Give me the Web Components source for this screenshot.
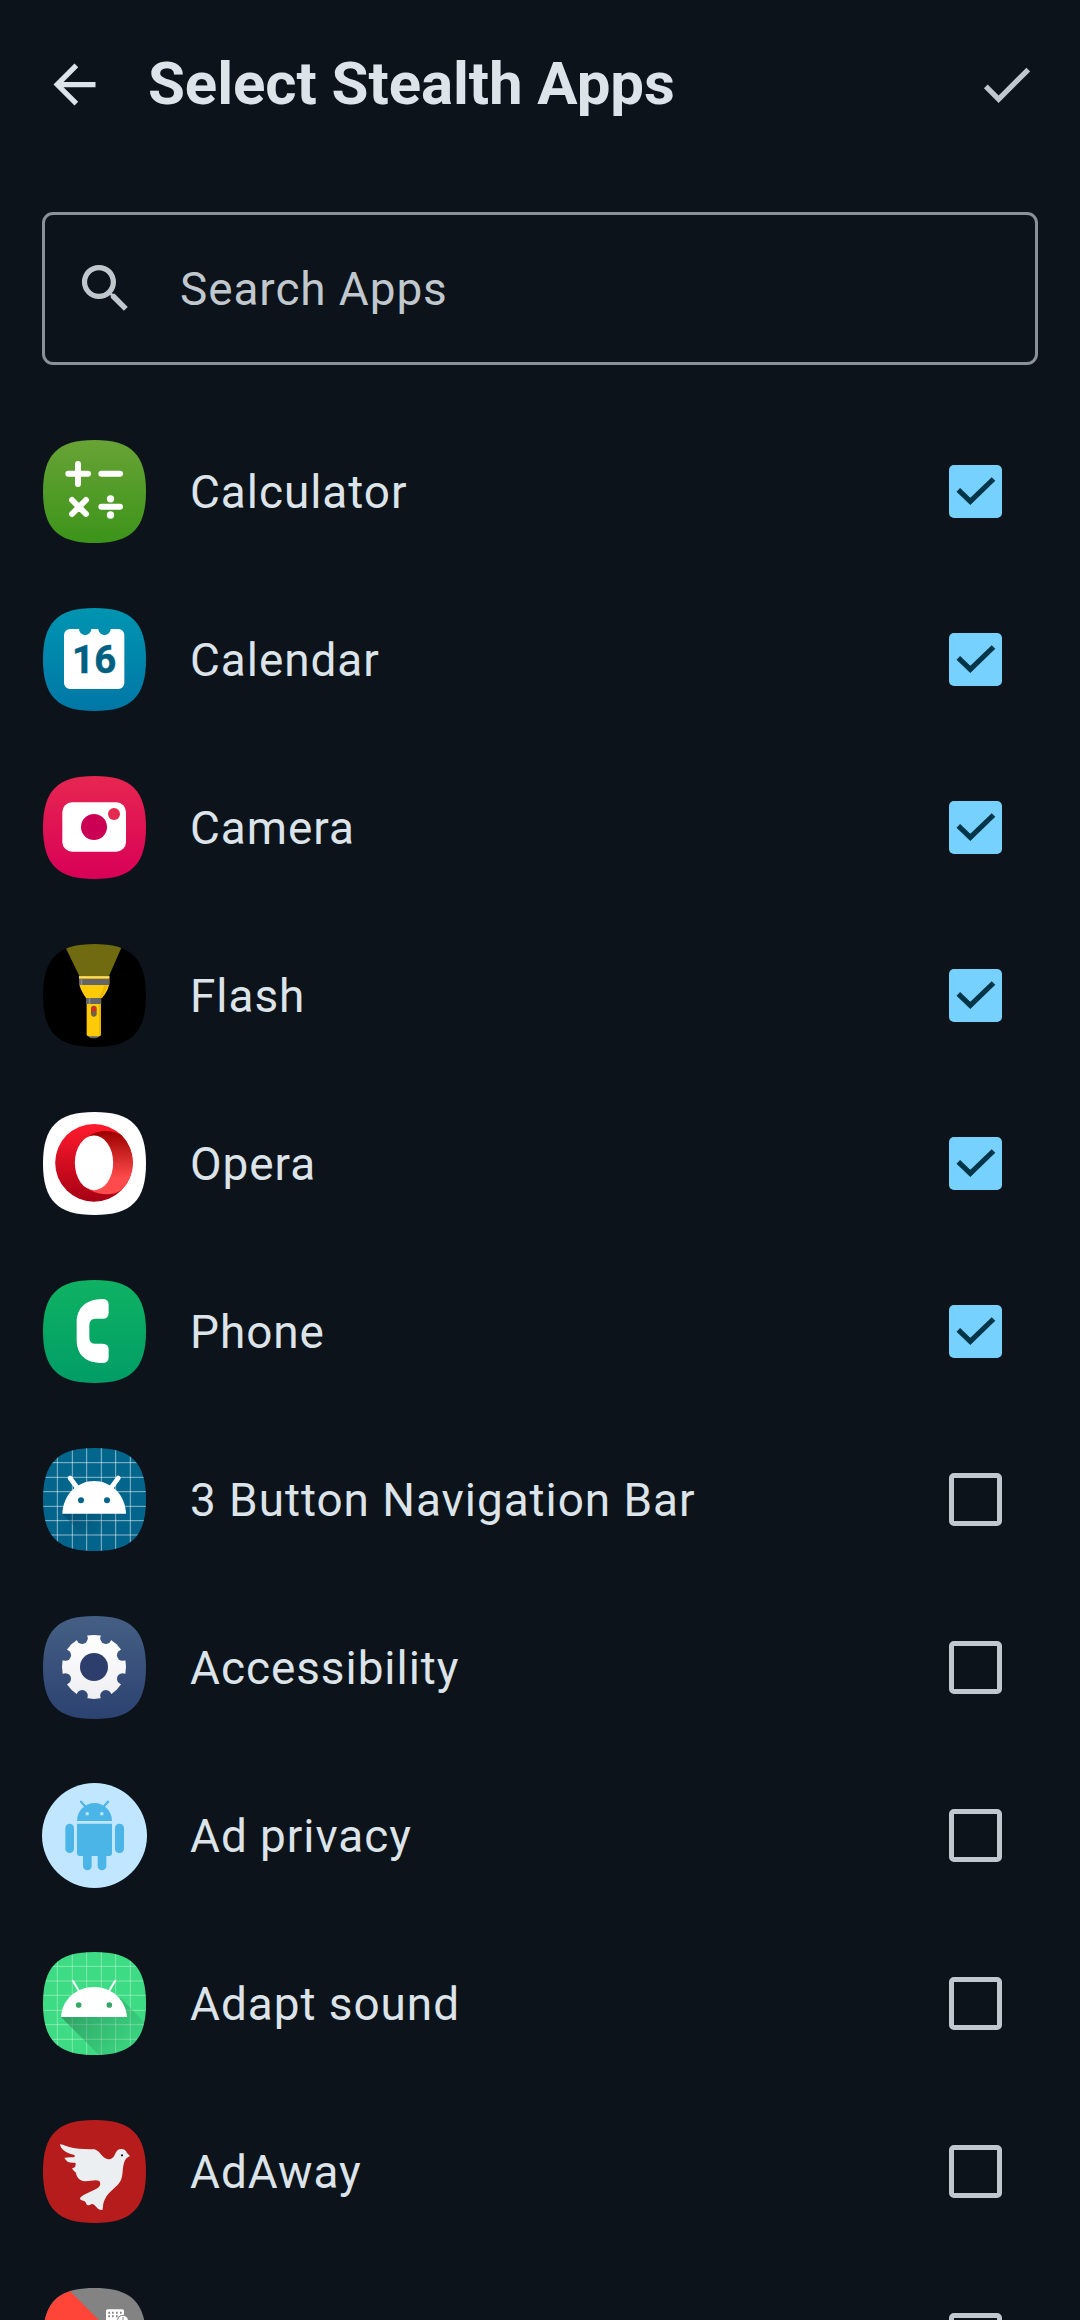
<!DOCTYPE html>
<html lang="en">
<head>
<meta charset="utf-8">
<title>Select Stealth Apps</title>
<style>
html,body{margin:0;background:#0c131a}
body{font-family:Roboto,sans-serif;width:1080px;height:2320px;overflow:hidden}
</style>
</head>
<body>
<stealth-page></stealth-page>
<script>
const SQ='M157.5 3C47 3 3 47 3 157.5S47 312 157.5 312 312 268 312 157.5 268 3 157.5 3Z';
/* y: vertical origin of the artwork; a,b: tile gradient stops */
const grad=(id,a,b)=>`<linearGradient id="${id}" x1="0" y1="0" x2="0" y2="1"><stop stop-color="${a}"/><stop offset="1" stop-color="${b}"/></linearGradient>`;
const lines=(xs,ys,y0)=>xs.map(x=>`M${x} ${y0}v320`).join('')+ys.map(y=>`M36 ${y}h320`).join('');
const notch=[...Array(8)].map((_,i)=>{const t=(22.5+45*i)*Math.PI/180;return `<circle cx="${192+93*Math.cos(t)}" cy="${696+93*Math.sin(t)}" r="17"/>`}).join('');
const ICONS={
calculator:{y:27,a:'#68a336',b:'#3c941a',art:`<g stroke="#fff" stroke-width="18" stroke-linecap="round"><path d="M115 131h59M144 102v60M214 131h56M126 210l42 42M168 210l-42 42M214 230.500h56"/></g><circle cx="241.500" cy="206.500" r="11" fill="#fff"/><circle cx="241.500" cy="255" r="11" fill="#fff"/>`},
calendar:{y:531,a:'#0095b1',b:'#0077a6',art:`<path fill="#fff" d="M120 597h27a18.500 18.500 0 0 0 37 0h21a18.500 18.500 0 0 0 37 0h23a18 18 0 0 1 18 18v144a18 18 0 0 1-18 18H120a18 18 0 0 1-18-18V615a18 18 0 0 1 18-18Z"/><text x="193" y="729" text-anchor="middle" font-family="Roboto,sans-serif" font-weight="700" font-size="115" fill="#006082" stroke="#006082" stroke-width="1.500">16</text>`},
camera:{y:30,a:'#e72651',b:'#d80057',art:`<rect x="97" y="112" width="191" height="148" rx="29" fill="#fff"/><circle cx="192" cy="186" r="39" fill="#cb0054"/><circle cx="252" cy="147" r="18" fill="#e32950"/>`},
flash:{y:534,a:'#000',b:'#000',art:`<path fill="#706a10" d="M98 530H282L237 633H148Z"/><path fill="#ffca08" d="M147 634h91v20q-1 20-22 45h-48q-18-25-21-45Z"/><path fill="#ffdf60" d="M147 634h91v5h-91Z"/><path fill="#656565" d="M147 641h91v19h-91ZM168 699h46v18h-46ZM174 812h35q-4 8-18 8t-17-8Z"/><path fill="#8a8a86" d="M152 641h5v19h-5ZM176 699h5v18h-5Z"/><path fill="#ffca08" d="M170 717h43v91q0 6-6 6h-31q-6 0-6-6Z"/><path fill="#eab700" d="M207 717h6v94h-6ZM224 661h10l-20 38h-6Z"/><rect x="183" y="722" width="17" height="33" rx="8.500" fill="#706149"/><circle cx="191.500" cy="732" r="7.500" fill="#dd2c18"/>`},
opera:{y:33,a:'#fff',b:'#fff',art:`<circle cx="192" cy="188.500" r="116.500" fill="url(#o1)"/><path fill="url(#o2)" d="M178 107C203 91 244 87 275 106A116.500 116.500 0 0 1 275 270C249 288 212 286 178 269Z"/><ellipse cx="192" cy="188.500" rx="57.500" ry="82" fill="#fff"/>`,defs:grad('o1','#ff1b2d','#a70014')+grad('o2','#9c0000','#ff4b4b').replace('offset="1"','offset=".75"')},
phone:{y:537,a:'#0fb263',b:'#009d66',art:`<path fill="#fff" d="M217 597Q236 597 236 614V638Q236 656 218 656H196Q178 657 178 675V713Q178 731 196 731H218Q236 731 236 749V771Q236 789 217 789C165 789 140 762 140 720V667C140 624 167 598 217 597Z"/>`},
nav:{y:36,a:'#03678d',b:'#03638a',art:`<path stroke="#fff" stroke-opacity=".55" stroke-width="3" d="${lines([82,127,170,214,257,301],[83,127,170,214,257,300],36)}"/><path fill="url(#n1)" d="M97 236H288L351 299V400H250Z"/><path stroke="#fff" stroke-width="14" stroke-linecap="round" d="M120 129l20 27M265 129l-20 27"/><path fill="#fff" d="M97 236C99 178 143 138 192.500 138S286 178 288 236Z"/><circle cx="153" cy="196" r="9" fill="#03658b"/><circle cx="231" cy="196" r="9" fill="#03658b"/>`,defs:`<linearGradient id="n1" x1="0" y1="0" x2=".6" y2=".6"><stop stop-color="#003a58" stop-opacity=".45"/><stop offset=".65" stop-color="#003a58" stop-opacity="0"/></linearGradient>`},
access:{y:540,a:'#455f84',b:'#2c4271',art:`<circle cx="192" cy="696" r="96" fill="url(#g1)" mask="url(#gm)"/>`,defs:grad('g1','#ffffff','#efeff3')+`<mask id="gm" maskUnits="userSpaceOnUse" x="36" y="540" width="315" height="315"><rect x="36" y="540" width="315" height="315" fill="#fff"/><g fill="#000">${notch}<circle cx="192" cy="696" r="42"/></g></mask>`,under:`<circle cx="192" cy="696" r="50" fill="#2e3e6c"/>`},
privacy:{y:39,round:1,a:'#c1e6ff',b:'#c1e6ff',art:`<g fill="#4bb5e8"><path d="M141 153a52.500 54 0 0 1 105 0ZM141 161H246V249Q246 258 237 258H150Q141 258 141 249Z"/><rect x="106" y="161" width="26" height="88" rx="13"/><rect x="255" y="161" width="27" height="88" rx="13"/><path d="M159 255h26v33a13 13 0 0 1-26 0ZM203 255h26v33a13 13 0 0 1-26 0Z"/></g><path stroke="#4bb5e8" stroke-width="6.500" stroke-linecap="round" d="M153 95l14 16M234 95l-14 16"/><path fill="#c1e6ff" d="M167 126.500h9v9h-9ZM211 126.500h9v9h-9Z"/>`},
adapt:{y:33,a:'#3ddc84',b:'#3ddc84',art:`<path stroke="#fff" stroke-opacity=".42" stroke-width="2.600" d="${lines([82,127,170,214,257,301],[79,123,166,211,254,298],33)}"/><path fill="url(#d1)" d="M93 231L272 175L360 263V400H262Z"/><path stroke="#fff" stroke-width="6" stroke-linecap="round" d="M129 123l18 31M255 123l-18 31"/><path fill="#fff" d="M93 231C96 179 139 141 192 141S287 179 291 231Z"/><circle cx="146" cy="195" r="8.500" fill="#34a866"/><circle cx="238" cy="195" r="8.500" fill="#34a866"/>`,defs:`<linearGradient id="d1" gradientUnits="userSpaceOnUse" x1="130" y1="190" x2="275" y2="335"><stop stop-color="#206040" stop-opacity=".5"/><stop offset="1" stop-color="#208050" stop-opacity=".12"/></linearGradient>`},
adaway:{y:42,a:'#b71c1c',b:'#b71c1c',art:`<path fill="#eceff1" d="M90 118C103 119 113 127 130 129C153 133 175 132 193 133C209 137 213 153 226 160Q234 164 242 162C257 157 254 138 268 133Q285 129 291 144L300 153L290 159C274 177 282 203 273 225C263 247 236 257 224 284C217 298 221 306 217 315Q205 316 197 304Q191 296 184 297Q176 304 169 298Q169 290 160 287Q149 285 150 279C163 265 192 258 207 246Q214 237 208 228C194 223 185 229 165 229C146 228 138 211 138 203C134 200 126 193 127 189Q138 188 136 181Q140 176 135 173C120 175 109 171 103 158Q112 156 132 157Q137 152 131 149C115 148 91 134 90 118Z"/><circle cx="276" cy="151" r="3.300" fill="#111"/>`},
last:{y:546,a:'#838383',b:'#838383',art:`<path fill="#ff4438" d="M105 543L360 800V870H30V543Z"/><rect x="228" y="613" width="54" height="60" rx="5" fill="#fff"/><path fill="#838383" d="M235 620h5v6h-5ZM246 620h5v6h-5ZM258 620h5v6h-5ZM270 620h5v6h-5ZM235 631h5v6h-5ZM246 631h5v6h-5ZM258 631h5v6h-5Z"/><circle cx="279" cy="647" r="18" fill="#838383"/><circle cx="279" cy="647" r="15" fill="#fff"/><path stroke="#838383" stroke-width="3" d="M279 636v12"/>`}
};
const define=(name,render)=>customElements.define(name,class extends HTMLElement{
  connectedCallback(){ if(!this.shadowRoot) this.attachShadow({mode:'open'}).innerHTML=render(this); }
});
define('app-icon',el=>{
  const i=ICONS[el.getAttribute('name')];
  const shape=i.round?'<circle cx="157.500" cy="157.500" r="157.500"/>':`<path d="${SQ}"/>`;
  return `<style>:host{display:block;width:105px;height:105px;flex:none}svg{display:block}</style>
<svg width="105" height="105" viewBox="0 0 315 315" fill="none"><defs><clipPath id="c">${shape}</clipPath>${grad('bg',i.a,i.b)}${i.defs||''}</defs>
<g fill="url(#bg)">${shape}</g><g clip-path="url(#c)"><g transform="translate(-36 ${-i.y})">${i.under||''}${i.art}</g></g></svg>`;
});
define('glyph-icon',el=>`<style>:host{display:block;width:63px;height:63px;flex:none}svg{display:block;fill:currentColor}</style>
<svg width="63" height="63" viewBox="0 0 24 24"><path d="${{
back:'M20 11H7.830l5.590-5.590L12 4l-8 8 8 8 1.410-1.410L7.830 13H20v-2z',
check:'M9 16.170L4.830 12l-1.420 1.410L9 19 21 7l-1.410-1.410z',
search:'M15.500 14h-.79l-.28-.27A6.471 6.471 0 0 0 16 9.500 6.500 6.500 0 1 0 9.500 16c1.610 0 3.090-.59 4.230-1.570l.27.28v.79l5 4.990L20.490 19l-4.990-5zm-6 0C7.010 14 5 11.990 5 9.500S7.010 5 9.500 5 14 7.010 14 9.500 11.990 14 9.500 14z'
}[el.getAttribute('name')]}"/></svg>`);
define('check-box',el=>`<style>:host{display:block;box-sizing:border-box;width:53px;height:53px;flex:none;border:5px solid #c0c7cd;border-radius:5px}
:host([checked]){border:0;background:#77d1ff}svg{display:block}</style>${el.hasAttribute('checked')?'<svg width="53" height="53" viewBox="0 0 53 53"><path d="M9.300 24.800L21.300 36.300L44.500 14" fill="none" stroke="#003548" stroke-width="5.200"/></svg>':''}`);
define('top-bar',()=>`<style>:host{display:flex;flex:none;align-items:center;box-sizing:border-box;height:169px;padding:0 42px 0 43px;color:#dce3e9}
h1{margin:-2px 0 0 42px;flex:1;font-size:60px;line-height:70px;font-weight:700;letter-spacing:-.08px;white-space:nowrap}.done{color:#c0c7cd}</style>
<glyph-icon name="back"></glyph-icon><h1><slot></slot></h1><glyph-icon class="done" name="check"></glyph-icon>`);
define('search-field',()=>`<style>:host{display:flex;flex:none;align-items:center;box-sizing:border-box;height:153px;margin:43px 42px 0;padding-left:29px;border:3px solid #8a9297;border-radius:11px;color:#c0c7cd;font-size:45.900px;line-height:54px;letter-spacing:.930px}
span{margin:0 0 0 43px;white-space:nowrap}</style><glyph-icon name="search"></glyph-icon><span><slot></slot></span>`);
define('app-row',el=>`<style>:host{display:flex;align-items:center;box-sizing:border-box;height:168px;padding:1px 78px 0 42px;color:#dce3e9;font-size:45.900px;line-height:54px;letter-spacing:.970px}
span{flex:1;margin:0 0 0 43px;white-space:nowrap}</style><app-icon name="${el.getAttribute('icon')}"></app-icon><span><slot></slot></span><check-box ${el.hasAttribute('checked')?'checked':''}></check-box>`);
define('stealth-page',()=>{
  const rows=[['calculator','Calculator',1],['calendar','Calendar',1],['camera','Camera',1],['flash','Flash',1],['opera','Opera',1],['phone','Phone',1],['nav','3 Button Navigation Bar'],['access','Accessibility'],['privacy','Ad privacy'],['adapt','Adapt sound'],['adaway','AdAway'],['last','']];
  return `<style>:host{display:flex;flex-direction:column;width:1080px;height:2320px;overflow:hidden;background:#0c131a}
main{display:flex;flex:none;flex-direction:column;margin-top:42px}app-row{flex:none}</style>
<top-bar>Select Stealth Apps</top-bar><search-field>Search Apps</search-field><main>${rows.map(([i,t,c])=>`<app-row icon="${i}" ${c?'checked':''}>${t}</app-row>`).join('')}</main>`;
});
</script>
</body>
</html>
